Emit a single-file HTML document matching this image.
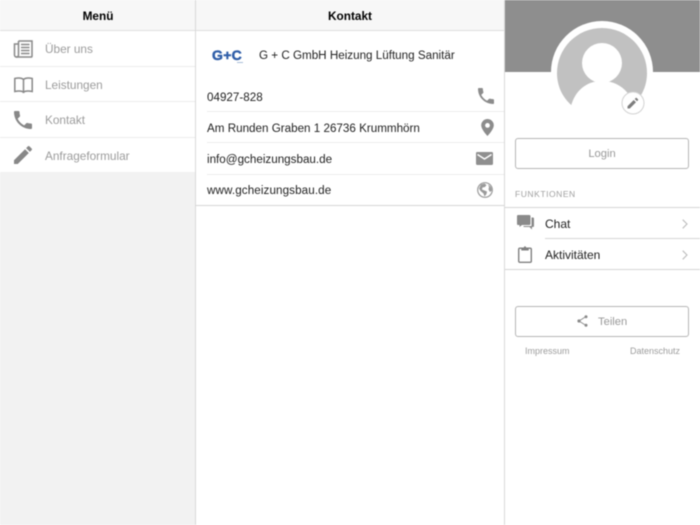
<!DOCTYPE html>
<html lang="de">
<head>
<meta charset="utf-8">
<style>
html,body{margin:0;padding:0;width:700px;height:525px;overflow:hidden;background:#fff;font-family:"Liberation Sans",sans-serif}
.a{position:absolute}
.t{position:absolute;white-space:nowrap;line-height:16px}
.l{position:absolute;height:1px}
svg{position:absolute;overflow:visible}
#r{position:absolute;left:0;top:0;width:700px;height:525px;filter:blur(.4px)}
</style>
</head>
<body>
<div id="r">
<!-- left column -->
<div class="a" style="left:0;top:0;width:195px;height:525px;background:#f2f2f2"></div>
<div class="a" style="left:0;top:0;width:195px;height:30px;background:#f7f7f7"></div>
<div class="a" style="left:0;top:31px;width:195px;height:141px;background:#fff"></div>
<div class="l" style="left:0;top:30px;width:195px;background:#dfdfdf"></div>
<div class="l" style="left:0;top:66px;width:195px;background:#ececec"></div>
<div class="l" style="left:0;top:101px;width:195px;background:#ececec"></div>
<div class="l" style="left:0;top:137px;width:195px;background:#ececec"></div>
<div class="a" style="left:195px;top:0;width:1px;height:525px;background:#d9d9d9"></div>
<div class="t" style="left:0;width:196px;text-align:center;top:8px;font-size:11.8px;font-weight:bold;color:#000">Menü</div>
<div class="t" style="left:45px;top:41px;font-size:11.8px;color:#9c9c9c">Über uns</div>
<div class="t" style="left:45px;top:77px;font-size:11.8px;color:#9c9c9c">Leistungen</div>
<div class="t" style="left:45px;top:112px;font-size:11.8px;color:#9c9c9c">Kontakt</div>
<div class="t" style="left:45px;top:148px;font-size:11.8px;color:#9c9c9c">Anfrageformular</div>

<svg style="left:13px;top:40px" width="20" height="18" viewBox="0 0 20 18" fill="none" stroke="#888" stroke-width="1.500">
<path d="M5.500 1h13.500v15.200a.8.800 0 0 1-.8.800H3"/><path d="M5.500 1v14a2 2 0 0 1-4 0V4h4"/>
<path d="M8 4.500h8.500M8 7.500h8.500M8 10.500h8.500M8 13.500h8.500" stroke-width="1.500"/>
</svg>
<svg style="left:14px;top:77px" width="19" height="16" viewBox="0 0 19 16" fill="none" stroke="#888" stroke-width="1.500">
<path d="M.8 1.500C4 .8 7.500.8 9.500 2.500V15C7.500 13.800 4 13.800.8 14.500zM18.200 1.500C15 .8 11.500.8 9.500 2.500V15c2-1.200 5.500-1.200 8.700-.5z"/>
</svg>
<svg style="left:14px;top:111px" width="18" height="18" viewBox="3 3 18 18" fill="#888">
<path d="M6.620 10.790c1.440 2.830 3.760 5.140 6.590 6.590l2.200-2.200c.27-.27.67-.36 1.020-.24 1.120.37 2.330.57 3.570.57.55 0 1 .45 1 1V20c0 .55-.45 1-1 1-9.390 0-17-7.610-17-17 0-.55.45-1 1-1h3.500c.55 0 1 .45 1 1 0 1.250.2 2.450.57 3.570.11.35.03.74-.25 1.020l-2.200 2.200z"/>
</svg>
<svg style="left:14px;top:146px" width="18" height="18" viewBox="3 3 18 18" fill="#888">
<path d="M3 17.250V21h3.750L17.810 9.940l-3.750-3.750L3 17.250zM20.710 7.040c.39-.39.39-1.020 0-1.410l-2.340-2.340c-.39-.39-1.020-.39-1.410 0l-1.830 1.830 3.750 3.750 1.830-1.830z"/>
</svg>

<!-- middle column -->
<div class="a" style="left:196px;top:0;width:308px;height:30px;background:#f7f7f7"></div>
<div class="l" style="left:196px;top:30px;width:308px;background:#dfdfdf"></div>
<div class="t" style="left:196px;width:308px;text-align:center;top:8px;font-size:11.8px;font-weight:bold;color:#000">Kontakt</div>
<div class="t" style="left:212px;top:46px;font-size:14px;font-weight:bold;color:#2f5ea8;letter-spacing:.3px;line-height:18px;-webkit-text-stroke:.5px #2f5ea8">G+C</div>
<div class="l" style="left:237px;top:62px;width:6px;background:#a8bcd8"></div>
<div class="t" style="left:259px;top:48px;font-size:11.65px;color:#222">G + C GmbH Heizung Lüftung Sanitär</div>
<div class="t" style="left:207px;top:90px;font-size:11.65px;color:#222">04927-828</div>
<div class="t" style="left:207px;top:121px;font-size:11.65px;color:#222">Am Runden Graben 1 26736 Krummhörn</div>
<div class="t" style="left:207px;top:152px;font-size:11.65px;color:#222">info@gcheizungsbau.de</div>
<div class="t" style="left:207px;top:183px;font-size:11.65px;color:#222;letter-spacing:.1px">www.gcheizungsbau.de</div>
<div class="l" style="left:207px;top:111px;width:297px;background:#ececec"></div>
<div class="l" style="left:207px;top:142px;width:297px;background:#ececec"></div>
<div class="l" style="left:207px;top:174px;width:297px;background:#ececec"></div>
<div class="l" style="left:196px;top:205px;width:308px;background:#d6d6d6"></div>

<svg style="left:478px;top:88px" width="16" height="16" viewBox="3 3 18 18" fill="#8c8c8c">
<path d="M6.620 10.790c1.440 2.830 3.760 5.140 6.590 6.590l2.200-2.200c.27-.27.67-.36 1.020-.24 1.120.37 2.330.57 3.570.57.55 0 1 .45 1 1V20c0 .55-.45 1-1 1-9.390 0-17-7.610-17-17 0-.55.45-1 1-1h3.500c.55 0 1 .45 1 1 0 1.250.2 2.450.57 3.570.11.35.03.74-.25 1.020l-2.200 2.200z"/>
</svg>
<svg style="left:481px;top:119px" width="13" height="17" viewBox="0 0 13 17">
<path fill="#8c8c8c" fill-rule="evenodd" d="M6.500 0A6.300 6.300 0 0 0 .2 6.300C.2 10.500 6.500 17 6.500 17s6.300-6.500 6.300-10.700A6.300 6.300 0 0 0 6.500 0zm0 4a2.400 2.400 0 1 1 0 4.800 2.400 2.400 0 0 1 0-4.800z"/>
</svg>
<svg style="left:476px;top:152px" width="17" height="13" viewBox="0 0 17 13">
<rect width="17" height="13" rx="1.200" fill="#8f8f8f"/>
<path d="M1.500 2.500 8.500 7l7-4.500" fill="none" stroke="#fff" stroke-width="1.400"/>
</svg>
<svg style="left:477px;top:182px" width="16" height="16" viewBox="0 0 16 16">
<circle cx="8" cy="8" r="7.300" fill="none" stroke="#9a9a9a" stroke-width="1.200"/>
<path fill="#9a9a9a" d="M4 2.500 7.500 1.500 9.500 3 8 5 5.500 5.500 5 7.500 7.500 8.500 10 9.500 9.500 12 7.500 14.500 6.500 11.500 3.500 9 2 6.500zM11 2.500 14 5 15 8.500 13 10 11.500 7.500 12 5z"/>
</svg>

<!-- right column -->
<div class="a" style="left:504px;top:0;width:1px;height:525px;background:#d9d9d9"></div>
<div class="a" style="left:505px;top:0;width:195px;height:72px;background:#8e8e8e"></div>
<svg style="left:505px;top:0" width="195" height="125" viewBox="505 0 195 125">
<path d="M551 72a51 51 0 0 1 102 0z" fill="#fff"/>
<path d="M557 73a45 45 0 0 1 90 0c0 16-8 29-21 37h-48c-13-8-21-21-21-37z" fill="#c1c1c1"/>
<circle cx="602" cy="63" r="20" fill="#fff"/>
<path d="M571 106c4-15 15-25 31-25s28 10 32 25v19h-63z" fill="#fff"/>
<circle cx="633" cy="103" r="11" fill="#fff" stroke="#d2d2d2" stroke-width="1"/>
<path fill="#7d7d7d" d="M627.500 108.500v-2.300l6.200-6.200 2.300 2.300-6.200 6.200zM634.700 99l1-1c.3-.3.700-.3 1 0l1.300 1.300c.3.300.3.700 0 1l-1 1z"/>
</svg>

<div class="a" style="left:515px;top:138px;width:172px;height:29px;border:1px solid #b5b5b5;border-radius:3px"></div>
<div class="t" style="left:515px;width:174px;text-align:center;top:146px;font-size:11.2px;color:#999">Login</div>

<div class="t" style="left:515px;top:186px;font-size:8.500px;color:#a0a0a0;letter-spacing:.55px">FUNKTIONEN</div>
<div class="l" style="left:505px;top:207px;width:195px;background:#d6d6d6"></div>
<div class="l" style="left:545px;top:238px;width:155px;background:#d6d6d6"></div>
<div class="l" style="left:505px;top:269px;width:195px;background:#d6d6d6"></div>
<div class="t" style="left:545px;top:216px;font-size:12px;color:#222">Chat</div>
<div class="t" style="left:545px;top:247px;font-size:12px;color:#222">Aktivitäten</div>

<svg style="left:517px;top:215px" width="17" height="16" viewBox="0 0 17 16" fill="#8a8a8a">
<path d="M0 1c0-.5.400-1 1-1h11.500c.5 0 1 .5 1 1v8c0 .5-.5 1-1 1H5L2.500 12v-2H1c-.6 0-1-.5-1-1z"/>
<path d="M14.500 2.500H16c.5 0 1 .4 1 1v7.500c0 .5-.5 1-1 1h-1V14.500L12.500 12H6.500v-1h8z"/>
</svg>
<svg style="left:518px;top:246px" width="14" height="17" viewBox="0 0 14 17" fill="none">
<rect x=".7" y="2.200" width="12.600" height="14.100" rx="1.200" stroke="#808080" stroke-width="1.400"/>
<path fill="#808080" d="M3.300 1.700h2.500C6 .8 6.400.200 7 .200S8 .8 8.200 1.700h2.500v2.800H3.300z"/>
</svg>
<svg style="left:682px;top:219px" width="6" height="10" viewBox="0 0 6 10" fill="none" stroke="#bdbdbd" stroke-width="1.100"><path d="M.7.700 5 5 .7 9.300"/></svg>
<svg style="left:682px;top:250px" width="6" height="10" viewBox="0 0 6 10" fill="none" stroke="#bdbdbd" stroke-width="1.100"><path d="M.7.700 5 5 .7 9.300"/></svg>

<div class="a" style="left:515px;top:306px;width:172px;height:29px;border:1px solid #b5b5b5;border-radius:3px"></div>
<div class="t" style="left:598px;top:314px;font-size:11.2px;color:#999">Teilen</div>
<svg style="left:577px;top:315px" width="11" height="12" viewBox="0 0 11 12" fill="#8a8a8a" stroke="#8a8a8a">
<path d="M9 1.500 2 6l7 4.500" fill="none" stroke-width=".9"/>
<circle cx="9" cy="1.700" r="1.500" stroke="none"/><circle cx="2" cy="6" r="1.600" stroke="none"/><circle cx="9" cy="10.300" r="1.500" stroke="none"/>
</svg>
<div class="t" style="left:525px;top:343px;font-size:9px;color:#9c9c9c">Impressum</div>
<div class="t" style="left:630px;top:343px;font-size:9px;color:#9c9c9c">Datenschutz</div>
</div>
</body>
</html>
